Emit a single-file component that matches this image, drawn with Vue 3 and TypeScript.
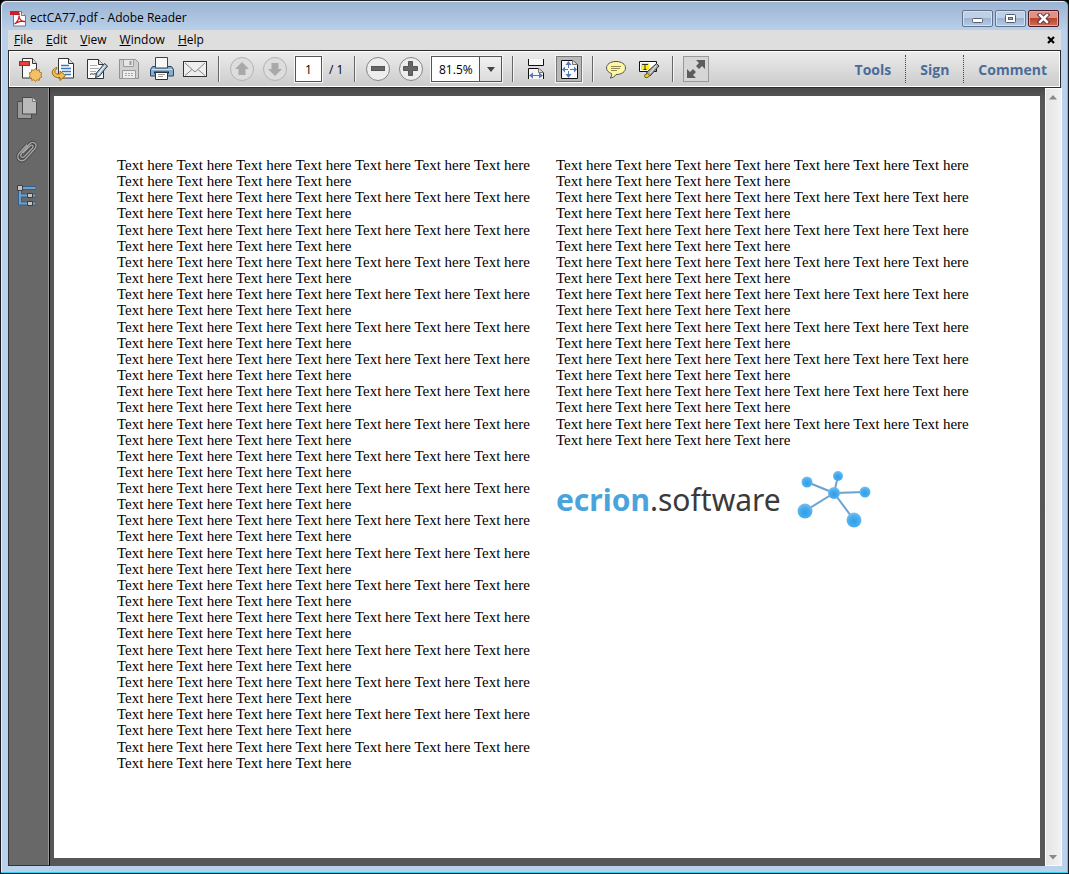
<script setup lang="ts">
import { ref } from 'vue'

const menus: string[] = ['File', 'Edit', 'View', 'Window', 'Help']
const panes: string[] = ['Tools', 'Sign', 'Comment']
const pageNumber = ref('1')
const zoom = ref('81.5%')

const longLine = Array(7).fill('Text here').join(' ')
const shortLine = Array(4).fill('Text here').join(' ')
const leftCount = 19
const rightCount = 9
</script>

<template>
  <div class="window">
    <header class="titlebar">
      <svg class="app-icon" width="17" height="17" viewBox="0 0 17 17" aria-hidden="true">
        <path d="M3.5 1.5h8l4 4v10.500h-12z" fill="#fff" stroke="#777" />
        <path d="M11.500 1.500v4h4" fill="#ddd" stroke="#777" />
        <path d="M0 1h9l1 4H0z" fill="#c8202b" />
        <path d="M4.500 14c3-2 5-6 4.500-8.500 0 4 3 6.500 6 6-3-1-8 .5-10.500 2.500z" fill="none" stroke="#c8202b" stroke-width="1.300" />
      </svg>
      <h1 class="title">ectCA77.pdf - Adobe Reader</h1>
      <div class="caption-buttons">
        <button class="caption" type="button" aria-label="Minimize">
          <svg width="13" height="11" viewBox="0 0 13 11"><rect x="1.500" y="5.500" width="10" height="4" rx="1" fill="#fff" stroke="#555b6b" /></svg>
        </button>
        <button class="caption" type="button" aria-label="Maximize">
          <svg width="13" height="11" viewBox="0 0 13 11"><rect x="1.500" y="1.500" width="10" height="8" rx="1" fill="#fff" stroke="#555b6b" /><rect x="4.500" y="4.500" width="4" height="2" fill="#9db7d5" stroke="#555b6b" /></svg>
        </button>
        <button class="caption close" type="button" aria-label="Close">
          <svg width="13" height="11" viewBox="0 0 13 11"><path d="M3 2l7 7M10 2l-7 7" stroke="#5c3444" stroke-width="4.500" stroke-linecap="square" /><path d="M3 2l7 7M10 2l-7 7" stroke="#fff" stroke-width="2.500" stroke-linecap="square" /></svg>
        </button>
      </div>
    </header>

    <nav class="menubar">
      <button v-for="menu in menus" :key="menu" class="menu" type="button"><u>{{ menu[0] }}</u>{{ menu.slice(1) }}</button>
      <button class="doc-close" type="button" aria-label="Close document">
        <svg width="8" height="8" viewBox="0 0 8 8"><path d="M1 1l6 6M7 1l-6 6" stroke="#000" stroke-width="2.200" /></svg>
      </button>
    </nav>

    <div class="toolbar">
      <div class="group">
        <button class="tool" type="button" aria-label="Create PDF">
          <svg width="26" height="26" viewBox="0 0 26 26">
            <path d="M5.500 2.500h10l4 5v14.500h-14z" fill="#fafafa" stroke="#333" />
            <path d="M15.500 2.500v5h4" fill="#ddd" stroke="#333" />
            <rect x="2.500" y="5.500" width="10" height="4" fill="#e5413f" stroke="#b51f2a" />
            <path d="M18.500 12.500l1.500 1.900 2.300-.7.200 2.400 2.300.8-.9 2.100.9 2.200-2.300.8-.2 2.400-2.300-.7-1.500 1.900-1.500-1.900-2.300.7-.2-2.400-2.300-.8.9-2.200-.9-2.100 2.300-.8.200-2.400 2.300.7z" fill="#f2c067" stroke="#b07d2b" />
          </svg>
        </button>
        <button class="tool" type="button" aria-label="Convert file">
          <svg width="26" height="26" viewBox="0 0 26 26">
            <path d="M8.500 2.500h10l5 5v14.500h-15z" fill="#fff" stroke="#333" />
            <path d="M18.500 2.500v5h5" fill="#ddd" stroke="#333" />
            <path d="M11 9.500h8M11 12.500h10M12 15.500h9M15 18.500h6" stroke="#3979bd" stroke-width="1.500" />
            <path d="M7 11.500c-4 1-5.500 4-4.500 6.500 1.200 3 4.500 4 7.500 3.500v3l5.500-5-5.500-4.500v3c-2.500.3-4.500 0-5-1.500-.4-1.500.5-3 2-4z" fill="#f3bd55" stroke="#98671e" />
          </svg>
        </button>
        <button class="tool" type="button" aria-label="Edit document">
          <svg width="26" height="26" viewBox="0 0 26 26">
            <path d="M4.500 3.500h11l5 5v14h-16z" fill="#fafafa" stroke="#333" />
            <path d="M15.500 3.500v5h5" fill="#ddd" stroke="#333" />
            <path d="M7 9.500h7M7 12.500h9M7 15.500h6" stroke="#aaa" />
            <path d="M7 18.500c2-2 3 1 5-1l2 1.500" fill="none" stroke="#333" />
            <path d="M21.500 7.500l3 2.500-8 10-4 1.500 1-4.500z" fill="#a9c3da" stroke="#273642" />
            <path d="M22 9.500l-7 9" stroke="#fff" />
          </svg>
        </button>
        <button class="tool" type="button" aria-label="Save" disabled>
          <svg width="26" height="26" viewBox="0 0 26 26">
            <path d="M3.500 3.500h16l3 3v16h-19z" fill="#cfcfcf" stroke="#929292" />
            <path d="M7.500 3.500h10v7h-10z" fill="#e7e7e7" stroke="#999" />
            <path d="M14.500 5v4" stroke="#999" stroke-width="2" />
            <path d="M6.500 14.500h13v8h-13z" fill="#ececec" stroke="#999" />
            <path d="M9 17.500h8M9 19.500h8" stroke="#aaa" stroke-dasharray="2 1" />
          </svg>
        </button>
        <button class="tool" type="button" aria-label="Print">
          <svg width="26" height="26" viewBox="0 0 26 26">
            <path d="M3.500 10.500h19l2 3v6.500h-23v-6.500z" fill="#86add0" stroke="#294760" />
            <path d="M6.500 12V1.500h12V12z" fill="#f8f8f8" stroke="#444" />
            <path d="M3 13.500h20" stroke="#c8dfef" />
            <path d="M5 16.500h15" stroke="#1c2a37" stroke-width="2" />
            <path d="M6.500 16.500h12v7h-12z" fill="#fff" stroke="#333" />
            <path d="M9 18.500h7M9 20.500h5" stroke="#999" />
          </svg>
        </button>
        <button class="tool" type="button" aria-label="Email">
          <svg width="26" height="26" viewBox="0 0 26 26">
            <rect x="1.500" y="5.500" width="23" height="15" fill="#eee" stroke="#333" />
            <path d="M3 7l10 9 10-9M3 19.500l7-6M23 19.500l-7-6" fill="none" stroke="#888" />
          </svg>
        </button>
      </div>
      <span class="sep"></span>
      <div class="group">
        <button class="tool" type="button" aria-label="Previous page" disabled>
          <svg width="26" height="26" viewBox="0 0 26 26"><circle cx="13" cy="13" r="11.500" fill="#ddd" stroke="#b2b2b2" /><path d="M13 6l7 7h-3.500v6h-7v-6H6z" fill="#a9a9a9" /></svg>
        </button>
        <button class="tool" type="button" aria-label="Next page" disabled>
          <svg width="26" height="26" viewBox="0 0 26 26"><circle cx="13" cy="13" r="11.500" fill="#ddd" stroke="#b2b2b2" /><path d="M13 20l7-7h-3.500V7h-7v6H6z" fill="#a9a9a9" /></svg>
        </button>
        <input v-model="pageNumber" class="page-input" type="text" aria-label="Page number" />
        <span class="page-total">/ 1</span>
      </div>
      <span class="sep"></span>
      <div class="group">
        <button class="tool" type="button" aria-label="Zoom out">
          <svg width="26" height="26" viewBox="0 0 26 26"><circle cx="13" cy="13" r="11.500" fill="#ededed" stroke="#858585" /><rect x="6.500" y="10.500" width="13" height="4" fill="#666" stroke="#555" /></svg>
        </button>
        <button class="tool" type="button" aria-label="Zoom in">
          <svg width="26" height="26" viewBox="0 0 26 26"><circle cx="13" cy="13" r="11.500" fill="#ededed" stroke="#858585" /><path d="M10.500 5.500h4v5h5v4h-5v5h-4v-5h-5v-4h5z" fill="#666" stroke="#555" /></svg>
        </button>
        <div class="zoom">
          <select v-model="zoom" class="zoom-select" aria-label="Zoom level">
            <option>81.5%</option>
            <option>100%</option>
          </select>
          <span class="zoom-arrow"><svg width="8" height="5" viewBox="0 0 8 5"><path d="M0 0h8L4 5z" fill="#444" /></svg></span>
        </div>
      </div>
      <span class="sep"></span>
      <div class="group">
        <button class="tool" type="button" aria-label="Fit width">
          <svg width="26" height="26" viewBox="0 0 26 26">
            <path d="M5.500 3v6.500h15V3" fill="#f6f6f6" stroke="#111" />
            <path d="M5.500 23V12.500h10l5 4V23" fill="#f6f6f6" stroke="#111" />
            <path d="M15.500 12.500v4h5" fill="#ddd" stroke="#777" />
            <path d="M7 19.500h12" stroke="#5877b5" />
            <path d="M6 19.500l4-3v6zM20 19.500l-4-3v6z" fill="#5877b5" />
          </svg>
        </button>
        <button class="tool pressed" type="button" aria-label="Fit page">
          <svg width="26" height="26" viewBox="0 0 26 26">
            <path d="M5.500 4.500h11l5 4v14h-16z" fill="#f8f8f8" stroke="#111" />
            <path d="M16.500 4.500v4h5" fill="#ddd" stroke="#777" />
            <path d="M12.500 7v5M12.500 15v5M8 13.500h4M14 13.500h5" stroke="#5877b5" />
            <path d="M12.500 5l3 4h-6zM12.500 22l3-4h-6zM6 13.500l3-3v6zM21 13.500l-3-3v6z" fill="#5877b5" />
          </svg>
        </button>
      </div>
      <span class="sep"></span>
      <div class="group">
        <button class="tool" type="button" aria-label="Add sticky note">
          <svg width="26" height="26" viewBox="0 0 26 26">
            <path d="M13 5.500c6 0 9.500 3 9.500 6.500s-3.500 6.500-9.500 6.500c-1 2-3.500 3.500-6 3.500 1.500-1 2-3 1.500-4.500C5.500 16.500 3.500 14.500 3.500 12c0-3.500 3.500-6.500 9.500-6.500z" fill="#fff8a0" stroke="#555" />
            <path d="M8 10.500h10M8 12.500h9M8 14.500h6" stroke="#8e8558" />
          </svg>
        </button>
        <button class="tool" type="button" aria-label="Highlight text">
          <svg width="26" height="26" viewBox="0 0 26 26">
            <path d="M3.500 5.500h17v10h-17z" fill="#fff" stroke="#111" />
            <path d="M5 7h8v7H5z" fill="#ffef20" />
            <path d="M6 8.500h6M9 8.500V14M7.500 13.500h3" stroke="#333" />
            <path d="M20.500 7.500l2.500 2.500-9 10-4-1 1-3z" fill="#aaa" stroke="#333" />
            <path d="M20 10l-6 7" stroke="#eee" />
            <path d="M8.500 19l3-1.500 2 2-1.500 2H9z" fill="#e5cf22" stroke="#777018" />
          </svg>
        </button>
      </div>
      <span class="sep"></span>
      <button class="tool read-mode" type="button" aria-label="Read mode">
        <svg width="24" height="24" viewBox="0 0 24 24"><path d="M12 3h9v9l-3-3-3 3-3-3 3-3zM3 12l3 3 3-3 3 3-3 3 3 3H3z" fill="#5c5c5c" /></svg>
      </button>
      <div class="panes">
        <button v-for="pane in panes" :key="pane" class="pane" type="button">{{ pane }}</button>
      </div>
    </div>

    <main class="workspace">
      <aside class="sidebar">
        <button class="side-btn" type="button" aria-label="Page thumbnails">
          <svg width="24" height="26" viewBox="0 0 24 26">
            <path d="M2.500 6.500h14v17h-14z" fill="#999" stroke="#4b4b4b" />
            <path d="M7.500 2.500h10l4 4v12.500h-14z" fill="#b9b9b9" stroke="#4b4b4b" />
            <path d="M17.500 2.500v4h4" fill="#ddd" stroke="#777" />
          </svg>
        </button>
        <button class="side-btn" type="button" aria-label="Attachments">
          <svg width="24" height="26" viewBox="0 0 24 26">
            <path d="M8 14l7-7c2-2 4 0 2.500 2l-8 8.500c-2.500 2.500-5-.5-3-3L14 5.500c4-4.500 9.500-.5 6 4l-9 10c-4.500 5-11 .5-7-5l8-9" fill="none" stroke="#444" stroke-width="3" />
            <path d="M8 14l7-7c2-2 4 0 2.500 2l-8 8.500c-2.500 2.500-5-.5-3-3L14 5.500c4-4.500 9.500-.5 6 4l-9 10c-4.500 5-11 .5-7-5l8-9" fill="none" stroke="#a5a5a5" stroke-width="1.400" />
          </svg>
        </button>
        <button class="side-btn" type="button" aria-label="Model tree">
          <svg width="24" height="26" viewBox="0 0 24 26">
            <path d="M5 5v15.500h16M5 12.500h16M5 5h16" fill="none" stroke="#345d87" stroke-width="4" />
            <path d="M5 5v15.500h15.500M5 12.500h15.500M5 5h15.500" fill="none" stroke="#72a0cc" stroke-width="2" />
            <path d="M2.500 2.500h5v5h-5zM12.500 10.500h5v4h-5zM12.500 18.500h5v4h-5z" fill="#c4c4c4" stroke="#3d3d3d" />
          </svg>
        </button>
      </aside>

      <div class="canvas">
        <article class="page">
          <div class="column">
            <p v-for="n in leftCount" :key="n">{{ longLine }}<br />{{ shortLine }}</p>
          </div>
          <div class="column">
            <p v-for="n in rightCount" :key="n">{{ longLine }}<br />{{ shortLine }}</p>
            <div class="logo">
              <span class="wordmark"><b>ecrion</b>.software</span>
              <svg width="76" height="60" viewBox="0 0 76 60" aria-hidden="true">
                <defs>
                  <radialGradient id="ball" cx="0.500" cy="0.600" r="0.600">
                    <stop offset="0" stop-color="#2f9de8" />
                    <stop offset="0.600" stop-color="#4aaeee" />
                    <stop offset="1" stop-color="#7fc2ee" />
                  </radialGradient>
                </defs>
                <path d="M37 23L10 12M37 23L41 6M37 23l31-1M37 23L8 41M37 23l20 27" stroke="#6ba3d0" stroke-width="2" />
                <g fill="url(#ball)">
                  <circle cx="37" cy="23" r="6" /><circle cx="10" cy="12" r="5.500" /><circle cx="41" cy="6" r="5" />
                  <circle cx="68" cy="22" r="5.500" /><circle cx="8" cy="41" r="7.500" /><circle cx="57" cy="50" r="7.500" />
                </g>
              </svg>
            </div>
          </div>
        </article>
      </div>

      <div class="scrollbar">
        <button class="scroll-btn" type="button" aria-label="Scroll up"><svg width="8" height="5" viewBox="0 0 8 5"><path d="M0 4.500L4 0l4 4.500z" fill="#888" /></svg></button>
        <button class="scroll-btn" type="button" aria-label="Scroll down"><svg width="8" height="5" viewBox="0 0 8 5"><path d="M0 0h8L4 4.500z" fill="#888" /></svg></button>
      </div>
    </main>
  </div>
</template>

<style>
body {
  margin: 0;
  background: #000;
}
</style>

<style scoped>
.window {
  display: flex;
  flex-direction: column;
  box-sizing: border-box;
  height: 100vh;
  padding: 0 7px 7px 7px;
  border: 1px solid #1b1b1f;
  border-radius: 6px 6px 0 0;
  box-shadow: inset -1px -1px 0 #35d3ee, inset 1px 1px 0 #e4eefa;
  background: linear-gradient(#9ab3d1, #b9d1ea 30px, #b9d1ea);
  font-family: "Open Sans", "Noto Sans", sans-serif;
  font-size: 12px;
  color: #000;
}
button {
  padding: 0;
  border: 0;
  background: none;
  font: inherit;
  color: inherit;
}
svg {
  display: block;
}
.titlebar {
  display: flex;
  align-items: center;
  height: 29px;
  padding: 5px 2px 0;
  box-sizing: border-box;
}
.title {
  flex: 1;
  margin: 0 0 0 3px;
  font-size: 12px;
  line-height: 16px;
  font-weight: 400;
}
.caption-buttons {
  display: flex;
  gap: 2px;
}
.caption {
  display: flex;
  align-items: center;
  justify-content: center;
  box-sizing: border-box;
  width: 31px;
  height: 17px;
  border: 1px solid #5f7390;
  border-radius: 2px;
  box-shadow: inset 0 0 0 1px #d3e2f2;
  background: linear-gradient(#bfd0e4 50%, #9bb4d0 50%, #b5cbe4);
}
.caption.close {
  border-color: #4c1a25;
  box-shadow: inset 0 0 0 1px #e6aca3;
  background: linear-gradient(#dd9388 50%, #bd422c 50%, #cf6f57);
}
.menubar {
  display: flex;
  align-items: center;
  gap: 13px;
  height: 20px;
  padding: 0 6px;
  background: #dedede;
}
.menu {
  line-height: 16px;
}
.doc-close {
  margin-left: auto;
}
.toolbar {
  display: flex;
  align-items: center;
  box-sizing: border-box;
  height: 38px;
  padding-left: 8px;
  border: 1px solid #2b2b2b;
  box-shadow: inset 0 0 0 1px #fff;
  background: linear-gradient(#ececec, #cbcbcb);
}
.group {
  display: flex;
  align-items: center;
  gap: 7px;
}
.tool {
  flex: none;
  width: 26px;
  height: 26px;
}
.tool.pressed {
  outline: 1px solid #f5f5f5;
  box-shadow: inset 0 0 0 1px #777;
  background: #b9b9b9;
}
.tool.read-mode {
  box-sizing: border-box;
  border: 1px solid #999;
  background: #d6d6d6;
}
.sep {
  flex: none;
  width: 1px;
  height: 26px;
  margin: 0 9px 0 10px;
  border-right: 1px solid #f4f4f4;
  background: #666;
}
.page-input {
  box-sizing: border-box;
  width: 27px;
  height: 26px;
  padding: 0;
  border: 1px solid #555;
  outline: 1px solid #f6f6f6;
  background: #fff;
  font: inherit;
  text-align: center;
}
.page-total {
  width: 15px;
  white-space: nowrap;
}
.zoom {
  position: relative;
  width: 71px;
  height: 26px;
}
.zoom-select {
  box-sizing: border-box;
  width: 100%;
  height: 100%;
  padding: 0 0 0 7px;
  border: 1px solid #555;
  border-radius: 0;
  outline: 1px solid #f6f6f6;
  appearance: none;
  background: #fff;
  font: inherit;
  color: #000;
}
.zoom-arrow {
  position: absolute;
  top: 1px;
  right: 1px;
  bottom: 1px;
  display: flex;
  align-items: center;
  justify-content: center;
  width: 21px;
  border-left: 1px solid #555;
  background: linear-gradient(#f1f1f1, #dcdcdc);
  pointer-events: none;
}
.panes {
  display: flex;
  margin-left: auto;
}
.pane {
  height: 28px;
  padding: 0 14px;
  border-right: 1px dotted #444;
  font-size: 14px;
  font-weight: 700;
  color: #4b6c99;
}
.pane:last-child {
  padding-right: 13px;
  border-right: 0;
}
.workspace {
  flex: 1;
  display: flex;
  min-height: 0;
  background: linear-gradient(#494949, #575757 10px);
}
.sidebar {
  display: flex;
  flex: none;
  flex-direction: column;
  align-items: center;
  gap: 18px;
  box-sizing: border-box;
  width: 42px;
  padding: 7px 4px 0 0;
  border-left: 1px solid #333;
  border-right: 1px solid #000;
  border-bottom: 1px solid #333;
  box-shadow: inset -1px 0 0 #9a9a9a;
  background: #686868;
}
.canvas {
  flex: 1;
  display: flex;
  padding: 8px 5px 8px 4px;
}
.page {
  flex: 1;
  display: flex;
  gap: 26px;
  padding: 61px 71px 87px 63px;
  background: #fff;
}
.column {
  flex: 1 0 0;
  display: grid;
  grid-template-rows: repeat(19, 1fr);
  white-space: nowrap;
}
p {
  margin: 0;
  font: 15px/16px "Liberation Serif", "Times New Roman", serif;
}
.logo {
  display: flex;
  grid-row: 10 / span 3;
  align-items: center;
  gap: 16px;
  padding-top: 8px;
  color: #3a3a3a;
}
.wordmark {
  font: 30px/40px "Noto Sans", sans-serif;
}
.wordmark b {
  color: #4ba3dc;
}
.scrollbar {
  display: flex;
  flex: none;
  flex-direction: column;
  justify-content: space-between;
  box-sizing: border-box;
  width: 17px;
  border: 1px solid #fafafa;
  background: linear-gradient(90deg, #e6e6e6, #f1f1f1);
}
.scroll-btn {
  display: flex;
  align-items: center;
  justify-content: center;
  height: 16px;
}
</style>
